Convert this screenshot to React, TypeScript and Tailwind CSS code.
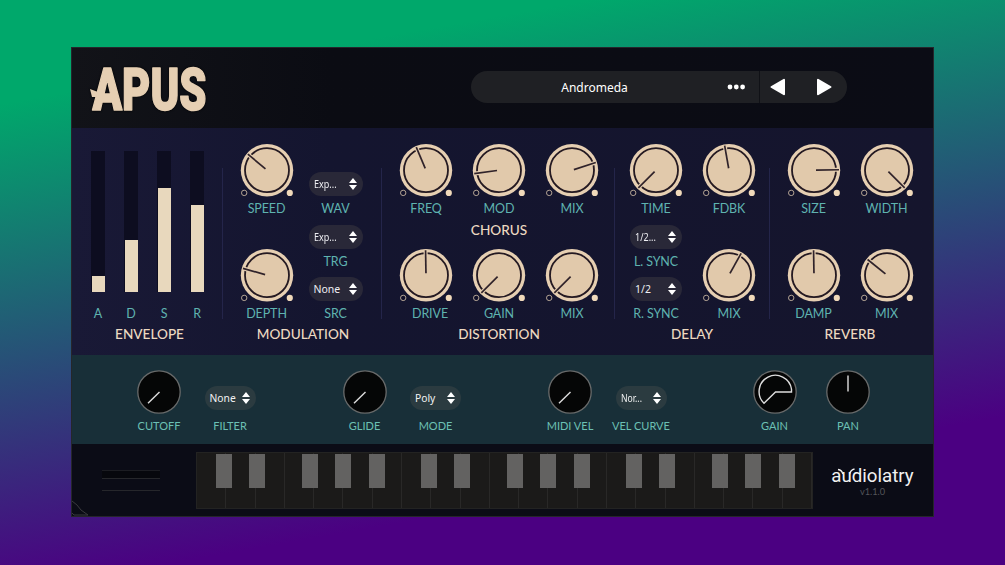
import React from 'react';

type KnobProps = { label: string; angle: number; shift?: string };

const Label: React.FC<{ children: React.ReactNode; className?: string }> = ({ children, className = '' }) => (
    <span className={`block h-4 whitespace-nowrap font-['Lato'] text-[12.5px] leading-4 tracking-[-0.1px] text-[#5fb3b0] ${className}`}>
        {children}
    </span>
);

const SmallLabel: React.FC<{ children: React.ReactNode; className?: string }> = ({ children, className = '' }) => (
    <span className={`block h-4 whitespace-nowrap font-['Lato'] text-[11px] leading-4 text-[#6cc0b4] ${className}`}>
        {children}
    </span>
);

const Title: React.FC<{ children: React.ReactNode }> = ({ children }) => (
    <h2 className="h-4 whitespace-nowrap text-center font-['Lato'] text-[13.6px] font-medium leading-4 text-[#ecd9c1]">
        {children}
    </h2>
);

const Arrows: React.FC = () => (
    <svg width="8" height="12" viewBox="0 0 8 12" fill="#fff" className="shrink-0">
        <path d="M4 0L8 5H0ZM0 7H8L4 12Z" />
    </svg>
);

const Knob: React.FC<KnobProps> = ({ label, angle, shift = '' }) => (
    <div className="flex h-[74px] w-[73px] flex-col items-center">
        <svg width="56" height="56" viewBox="-28 -27.2 56 56" className="shrink-0">
            <circle r="26.2" fill="#e6cfb2" />
            <circle r="22" fill="#e1c9ab" stroke="#251a22" strokeWidth="1.8" />
            <g transform={`rotate(${angle})`}>
                <path d="M0 -19V-25.5" stroke="#e6cfb2" strokeWidth="4" />
                <path d="M0 -2V-25" stroke="#30232a" strokeWidth="1.7" />
            </g>
            <circle cx="-22.8" cy="22.7" r="2.7" fill="#10102a" stroke="#b5a595" strokeWidth="1" />
            <circle cx="22.8" cy="22.7" r="3.1" fill="#f0d9ba" />
        </svg>
        <Label className={`mt-[2px] shrink-0 ${shift}`}>{label}</Label>
    </div>
);

const Select: React.FC<{ value: string; label: string; narrow?: boolean; box?: string }> = ({
    value,
    label,
    narrow = false,
    box = 'w-[54px]',
}) => (
    <div className="flex h-[45px] w-[71px] flex-col items-center">
        <div className={`flex h-6 shrink-0 items-center justify-between rounded-full bg-[#292838] pl-[5px] pr-[6px] ${box}`}>
            <span
                className={`whitespace-nowrap font-['Noto_Sans'] text-[10.5px] leading-6 text-[#eeeef2] ${
                    narrow ? 'w-[22px] origin-left scale-x-[.86]' : ''
                }`}
            >
                {value}
            </span>
            <Arrows />
        </div>
        <Label className="mt-[5px] shrink-0">{label}</Label>
    </div>
);

const DarkKnob: React.FC<{ label: string; path: string }> = ({ label, path }) => (
    <div className="flex w-[71px] flex-col items-center">
        <svg width="46" height="46" viewBox="-23 -23 46 46">
            <circle r="21.2" fill="#050606" stroke="#686a6a" strokeWidth="1.3" />
            <path d={path} fill="none" stroke="#dedede" strokeWidth="1.4" />
        </svg>
        <SmallLabel className="mt-[3px]">{label}</SmallLabel>
    </div>
);

const SmallSelect: React.FC<{ value: string; label: string; narrow?: boolean }> = ({ value, label, narrow = false }) => (
    <div className="flex w-[71px] flex-col items-center pt-[17px]">
        <div className="flex h-6 w-[51px] items-center justify-between rounded-full bg-[#2b3b40] pl-[5px] pr-[6px]">
            <span
                className={`whitespace-nowrap font-['Noto_Sans'] text-[10.3px] leading-6 text-[#f2f2f2] ${
                    narrow ? 'w-[22px] origin-left scale-x-[.84]' : ''
                }`}
            >
                {value}
            </span>
            <Arrows />
        </div>
        <SmallLabel className="mt-2">{label}</SmallLabel>
    </div>
);

const Divider: React.FC = () => <div className="mt-10 h-[151px] w-px shrink-0 bg-[#24254a]" />;

const envelope = [
    { name: 'A', level: 16 },
    { name: 'D', level: 52 },
    { name: 'S', level: 104 },
    { name: 'R', level: 87.5 },
];

const Octave: React.FC = () => (
    <div className="relative flex flex-1">
        {[0, 1, 2, 3, 4, 5, 6].map((k) => (
            <div key={k} className="flex-1 border-r border-[#292827]" />
        ))}
        <div className="absolute left-[19px] top-px h-[34px] w-4 bg-[#636261]" />
        <div className="absolute left-[52px] top-px h-[34px] w-4 bg-[#636261]" />
        <div className="absolute left-[105px] top-px h-[34px] w-4 bg-[#636261]" />
        <div className="absolute left-[138px] top-px h-[34px] w-4 bg-[#636261]" />
        <div className="absolute left-[171.5px] top-px h-[34px] w-4 bg-[#636261]" />
    </div>
);

const needle = 'M0.5 0L-11 11.2';

const App: React.FC = () => {
    return (
        <div className="h-[565px] w-[1005px] bg-[linear-gradient(170deg,#00a86b_14%,#4b0082_80%)] pl-[71px] pt-[47px]">
            <div className="flex h-[470px] w-[863px] flex-col border border-[#25262b] bg-[#0b0c14]">
                <header className="flex h-20 shrink-0 items-start justify-between bg-linear-to-r from-[#121318] via-[#0b0c13] via-30% to-[#0b0c15] pl-[16px] pr-[86px]">
                    <svg width="128" height="80" viewBox="0 0 128 80" className="overflow-visible drop-shadow-[0_0_1px_#000]">
                        <text
                            x="4.5"
                            y="61.5"
                            textLength="114"
                            lengthAdjust="spacingAndGlyphs"
                            fontFamily="Roboto, sans-serif"
                            fontWeight="900"
                            fontSize="60"
                            fill="#e6cfb3"
                            stroke="#e6cfb3"
                            strokeWidth="1.6"
                            strokeLinejoin="round"
                        >
                            APUS
                        </text>
                        <path d="M2 41L10 44L8 49H4Z" fill="#e6cfb3" />
                    </svg>
                    <div className="mt-[23px] flex h-8 w-[376px] rounded-full bg-[#1f2024] text-white">
                        <div className="flex w-[289px] items-center border-r border-[#101116]">
                            <span className="w-[247px] pt-px text-center font-['Noto_Sans'] text-[12px]">Andromeda</span>
                            <svg width="20" height="6" viewBox="0 0 20 6" fill="#fff" className="ml-[8px]">
                                <circle cx="4" cy="3" r="2.4" />
                                <circle cx="10.3" cy="3" r="2.4" />
                                <circle cx="16.6" cy="3" r="2.4" />
                            </svg>
                        </div>
                        <div className="flex items-center gap-[30px] pl-[10px]">
                            <svg width="16" height="18" viewBox="0 0 16 18" fill="#fff" stroke="#fff" strokeLinejoin="round" strokeWidth="2">
                                <path d="M1.5 9L14 1.8V16.2Z" />
                            </svg>
                            <svg width="16" height="18" viewBox="0 0 16 18" fill="#fff" stroke="#fff" strokeLinejoin="round" strokeWidth="2">
                                <path d="M14.5 9L2 1.8V16.2Z" />
                            </svg>
                        </div>
                    </div>
                </header>

                <main className="flex h-[227px] shrink-0 bg-linear-to-r from-[#191936] via-[#14152f] via-30% to-[#15152d]">
                    <section className="flex w-[150px] flex-col pl-[5px] pt-[23px]">
                        <div className="flex gap-[19px] pl-[14px]">
                            {envelope.map((e) => (
                                <div key={e.name} className="flex w-[14px] flex-col items-center">
                                    <div className="flex h-[141px] w-[14px] items-end justify-center bg-[#0d0d20]">
                                        <div className="w-[13px] bg-[#e8d8bd]" style={{ height: e.level }} />
                                    </div>
                                    <Label className="mt-[14px]">{e.name}</Label>
                                </div>
                            ))}
                        </div>
                        <div className="mt-1">
                            <Title>ENVELOPE</Title>
                        </div>
                    </section>
                    <Divider />

                    <section className="flex w-[158px] flex-col pl-[7px] pt-[15px]">
                        <div className="flex">
                            <div className="flex flex-col gap-[31px]">
                                <Knob label="SPEED" angle={-50} />
                                <Knob label="DEPTH" angle={-74} />
                            </div>
                            <div className="-ml-[3px] flex flex-col gap-[7.5px] pt-[29px]">
                                <Select value="Exp..." label="WAV" narrow />
                                <Select value="Exp..." label="TRG" narrow />
                                <Select value="None" label="SRC" />
                            </div>
                        </div>
                        <div className="mt-1 pr-[5px]">
                            <Title>MODULATION</Title>
                        </div>
                    </section>
                    <Divider />

                    <section className="flex w-[232px] flex-col items-center pl-[2px] pt-[15px]">
                        <div className="flex">
                            <Knob label="FREQ" angle={-23} />
                            <Knob label="MOD" angle={-98} />
                            <Knob label="MIX" angle={72} />
                        </div>
                        <div className="h-[31px] pt-[5px]">
                            <Title>CHORUS</Title>
                        </div>
                        <div className="flex">
                            <Knob label="DRIVE" angle={-1} shift="ml-2" />
                            <Knob label="GAIN" angle={-135} />
                            <Knob label="MIX" angle={-135} />
                        </div>
                        <div className="mt-1">
                            <Title>DISTORTION</Title>
                        </div>
                    </section>
                    <Divider />

                    <section className="flex w-[154px] flex-col items-center pt-[15px]">
                        <div className="flex pl-[1px]">
                            <div className="flex flex-col items-center">
                                <Knob label="TIME" angle={-135} />
                                <div className="flex flex-col gap-[7.5px] pt-[7.5px]">
                                    <Select value="1/2..." label="L. SYNC" narrow box="w-[52px]" />
                                    <Select value="1/2" label="R. SYNC" box="w-[52px]" />
                                </div>
                            </div>
                            <div className="flex flex-col gap-[31px]">
                                <Knob label="FDBK" angle={-10} />
                                <Knob label="MIX" angle={29} />
                            </div>
                        </div>
                        <div className="mt-1">
                            <Title>DELAY</Title>
                        </div>
                    </section>
                    <Divider />

                    <section className="flex w-[163px] flex-col items-center pr-[3px] pt-[15px]">
                        <div className="grid grid-cols-2 gap-y-[31px]">
                            <Knob label="SIZE" angle={89} />
                            <Knob label="WIDTH" angle={135} />
                            <Knob label="DAMP" angle={-1} />
                            <Knob label="MIX" angle={-51} />
                        </div>
                        <div className="mt-1">
                            <Title>REVERB</Title>
                        </div>
                    </section>
                </main>

                <section className="flex h-[89px] shrink-0 gap-[63.5px] bg-[#182f38] pl-[51.5px] pt-[14px]">
                    <div className="flex">
                        <DarkKnob label="CUTOFF" path={needle} />
                        <SmallSelect value="None" label="FILTER" />
                    </div>
                    <div className="flex">
                        <DarkKnob label="GLIDE" path={needle} />
                        <SmallSelect value="Poly" label="MODE" />
                    </div>
                    <div className="flex">
                        <DarkKnob label="MIDI VEL" path={needle} />
                        <SmallSelect value="Nor..." label="VEL CURVE" narrow />
                    </div>
                    <div className="-ml-px flex gap-[2.5px]">
                        <DarkKnob label="GAIN" path="M0.5 0H16.5V-3A16.3 16.3 0 1 0 -11 11.2Z" />
                        <DarkKnob label="PAN" path="M0 -0.5V-16.5" />
                    </div>
                </section>

                <footer className="flex h-[72px] shrink-0 bg-[#0b0c16] pt-2">
                    <div className="relative w-[124px] pl-[30px] pt-[18px]">
                        <div className="h-2 w-[58px] border-t border-[#1c1d22] bg-[#07080d]" />
                        <div className="h-[13px] w-[58px] border-b border-t border-[#26272b]" />
                        <svg width="18" height="18" viewBox="0 0 18 18" fill="none" stroke="#3a3a3e" className="absolute bottom-0 left-0">
                            <path d="M0 3L5 7L9 12L16 17H2L0 15" />
                        </svg>
                    </div>
                    <div className="flex h-[57px] w-[617px] border border-[#232322] bg-[#1b1a19]">
                        <Octave />
                        <Octave />
                        <Octave />
                    </div>
                    <div className="flex w-[119px] flex-col items-center pt-[14px]">
                        <div className="relative font-['Roboto'] text-[18.7px] leading-[21px] text-[#f1f1f1]">
                            audiolatry
                            <svg width="28" height="10" viewBox="0 0 28 10" className="absolute left-0 top-0" fill="none" stroke="#f1f1f1" strokeWidth="1.3">
                                <path d="M7 3.5Q11 4 11.8 8M18.6 8Q19.5 4 23.5 3" />
                            </svg>
                        </div>
                        <span className="font-['Lato'] text-[9.2px] leading-[10px] text-[#55565b]">v1.1.0</span>
                    </div>
                </footer>
            </div>
        </div>
    );
};

export default App;
